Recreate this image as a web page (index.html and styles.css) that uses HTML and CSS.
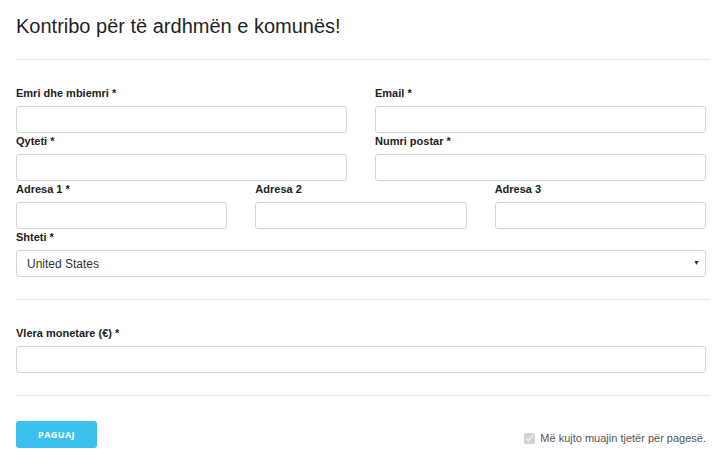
FILE: index.html
```html
<!DOCTYPE html>
<html lang="sq">
<head>
<meta charset="utf-8">
<title>Kontribo</title>
<link rel="stylesheet" href="styles.css">
</head>
<body>
<div class="page">
  <h1 class="title">Kontribo për të ardhmën e komunës!</h1>
  <hr class="rule">
  <form class="form">
    <div class="grid grid-2">
      <div class="field"><label class="label">Emri dhe mbiemri *</label><input class="input" type="text"></div>
      <div class="field"><label class="label">Email *</label><input class="input" type="text"></div>
      <div class="field"><label class="label">Qyteti *</label><input class="input" type="text"></div>
      <div class="field"><label class="label">Numri postar *</label><input class="input" type="text"></div>
    </div>
    <div class="grid grid-3">
      <div class="field"><label class="label">Adresa 1 *</label><input class="input" type="text"></div>
      <div class="field"><label class="label">Adresa 2</label><input class="input" type="text"></div>
      <div class="field"><label class="label">Adresa 3</label><input class="input" type="text"></div>
    </div>
    <div class="field">
      <label class="label">Shteti *</label>
      <div class="select-wrap">
        <select class="select"><option>United States</option></select>
        <span class="arrow">▼</span>
      </div>
    </div>
    <hr class="rule rule-mid">
    <div class="field">
      <label class="label">Vlera monetare (€) *</label>
      <input class="input" type="text">
    </div>
    <hr class="rule rule-mid">
    <div class="footer">
      <button type="button" class="btn">PAGUAJ</button>
      <label class="remember"><input class="check" type="checkbox" checked disabled> Më kujto muajin tjetër për pagesë.</label>
    </div>
  </form>
</div>
</body>
</html>
```

FILE: styles.css
```css
* { box-sizing: border-box; }
html, body { margin: 0; padding: 0; background: #fff; }
body { font-family: "Liberation Sans", Arial, sans-serif; color: #222; }
.page { width: 690px; margin-left: 16px; }
.title {
  margin: 0;
  padding-top: 14px;
  font-size: 20px;
  line-height: 24px;
  font-weight: normal;
  color: #1f1f1f;
}
.rule {
  border: 0;
  height: 1px;
  background: #e8e8e8;
  margin: 21px -4px 25px 0;
}
.rule-mid { margin-top: 22px; margin-bottom: 25px; }
.form { display: flex; flex-direction: column; }
.grid { display: grid; column-gap: 28px; }
.grid-2 { grid-template-columns: 1fr 1fr; }
.grid-3 { grid-template-columns: 1fr 1fr 1fr; }
.field { display: flex; flex-direction: column; }
.label {
  font-size: 11px;
  line-height: 15px;
  padding-top: 1px;
  font-weight: bold;
  color: #222;
  margin-bottom: 5px;
}
.input {
  height: 27px;
  border: 1px solid #d6d6d6;
  border-radius: 3px;
  background: #fff;
  font: 12px "Liberation Sans", Arial, sans-serif;
  padding: 0 10px;
}
.select-wrap { position: relative; }
.select {
  appearance: none;
  -webkit-appearance: none;
  width: 100%;
  height: 27px;
  border: 1px solid #d6d6d6;
  border-radius: 3px;
  background: #fff;
  font: 12px "Liberation Sans", Arial, sans-serif;
  color: #333;
  padding: 0 10px;
}
.arrow {
  position: absolute;
  right: 6px;
  top: 9px;
  font-size: 7px;
  line-height: 8px;
  color: #333;
  pointer-events: none;
}
.footer {
  display: flex;
  justify-content: space-between;
  align-items: center;
}
.btn {
  width: 81px;
  height: 27px;
  border: 0;
  border-radius: 3px;
  background: #3ec0ee;
  color: #fff;
  font: bold 9px "Open Sans", "Liberation Sans", sans-serif;
  letter-spacing: 0.4px;
  padding: 0;
}
.remember {
  display: flex;
  align-items: center;
  gap: 4px;
  font-size: 11px;
  line-height: 15px;
  color: #555;
  margin-top: 7px;
}
.check {
  width: 11px;
  height: 11px;
  margin: 0 1px 0 0;
  accent-color: #d8d8d8;
}
```
